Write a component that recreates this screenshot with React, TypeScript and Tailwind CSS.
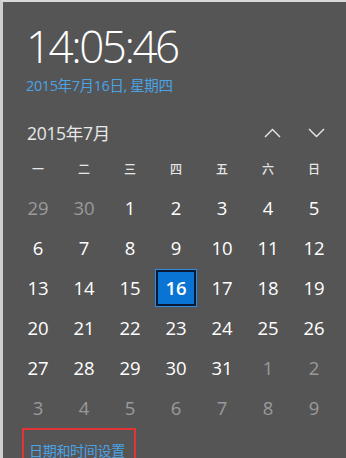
const weekdays = ['一', '二', '三', '四', '五', '六', '日'];

interface Day {
  n: number;
  current: boolean;
}

const days: Day[] = [
  { n: 29, current: false },
  { n: 30, current: false },
  ...Array.from({ length: 31 }, (_, i) => ({ n: i + 1, current: true })),
  ...Array.from({ length: 9 }, (_, i) => ({ n: i + 1, current: false })),
];

const font = { fontFamily: '"Open Sans", "Noto Sans CJK SC", sans-serif' };

function Chevron({ up }: { up?: boolean }) {
  return (
    <svg width="17" height="10" viewBox="0 0 17 10" fill="none" stroke="#e8e8e8" strokeWidth="1.4">
      {up ? <polyline points="1,9 8.5,1.5 16,9" /> : <polyline points="1,1 8.5,8.5 16,1" />}
    </svg>
  );
}

export default function App() {
  return (
    <div
      className="relative w-[346px] h-[458px] overflow-hidden bg-[#555555] border-t-2 border-t-[#d8d8d8] border-l-[3px] border-l-[#cfcfcf]"
      style={font}
    >
      {/* Clock */}
      <div className="pl-[23px] pt-[20px]">
        <div className="h-[48px] flex items-center text-[44px] font-light leading-none tracking-[-2.5px] text-white">
          14:05:46
        </div>
        <div className="mt-[8px] h-[16px] flex items-center text-[14.5px] text-[#4ba3e6] tracking-[-0.4px]">
          2015年7月16日, 星期四
        </div>
      </div>

      {/* Month header */}
      <div className="mt-[26px] h-[26px] flex items-center justify-between pl-[24px] pr-[21px]">
        <span className="text-[17.5px] text-[#e8e8e8] tracking-[-0.3px]">2015年7月</span>
        <div className="flex items-center gap-[27px]">
          <Chevron up />
          <Chevron />
        </div>
      </div>

      {/* Calendar */}
      <div className="pl-[12px]">
        <div className="mt-[14px] h-[20px] grid grid-cols-[repeat(7,46px)]">
          {weekdays.map((w) => (
            <div key={w} className="flex items-center justify-center text-[12px] font-medium text-[#e6e6e6]">
              {w}
            </div>
          ))}
        </div>
        <div className="mt-[8px] grid grid-cols-[repeat(7,46px)] auto-rows-[40px]">
          {days.map((d, i) => {
            const selected = d.current && d.n === 16;
            return (
              <div key={i} className="flex items-center justify-center">
                {selected ? (
                  <div className="w-[42px] h-[38px] flex items-center justify-center bg-[#0a74d4] border border-[#2f8ce0] shadow-[inset_0_0_0_2px_#0b1a33] text-[18.5px] font-semibold text-white">
                    {d.n}
                  </div>
                ) : (
                  <span className={`text-[18.5px] ${d.current ? 'text-white' : 'text-[#9a9a9a]'}`}>
                    {d.n}
                  </span>
                )}
              </div>
            );
          })}
        </div>
      </div>

      {/* Settings link */}
      <div className="ml-[19px] w-[114px] h-[40px] border-2 border-[#e23434] pl-[5px] pt-[8px]">
        <span className="text-[14px] leading-[20px] text-[#4ba3e6] tracking-[-0.3px]">日期和时间设置</span>
      </div>
    </div>
  );
}
